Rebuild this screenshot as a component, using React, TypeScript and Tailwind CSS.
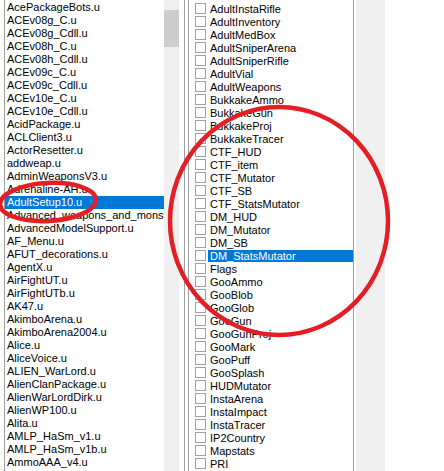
import React from "react";

const leftItems = [
  "AcePackageBots.u",
  "ACEv08g_C.u",
  "ACEv08g_Cdll.u",
  "ACEv08h_C.u",
  "ACEv08h_Cdll.u",
  "ACEv09c_C.u",
  "ACEv09c_Cdll.u",
  "ACEv10e_C.u",
  "ACEv10e_Cdll.u",
  "AcidPackage.u",
  "ACLClient3.u",
  "ActorResetter.u",
  "addweap.u",
  "AdminWeaponsV3.u",
  "Adrenaline-AH.u",
  "AdultSetup10.u",
  "Advanced_weapons_and_monsters.u",
  "AdvancedModelSupport.u",
  "AF_Menu.u",
  "AFUT_decorations.u",
  "AgentX.u",
  "AirFightUT.u",
  "AirFightUTb.u",
  "AK47.u",
  "AkimboArena.u",
  "AkimboArena2004.u",
  "Alice.u",
  "AliceVoice.u",
  "ALIEN_WarLord.u",
  "AlienClanPackage.u",
  "AlienWarLordDirk.u",
  "AlienWP100.u",
  "Alita.u",
  "AMLP_HaSm_v1.u",
  "AMLP_HaSm_v1b.u",
  "AmmoAAA_v4.u",
];

const rightItems = [
  "AdultInstaRifle",
  "AdultInventory",
  "AdultMedBox",
  "AdultSniperArena",
  "AdultSniperRifle",
  "AdultVial",
  "AdultWeapons",
  "BukkakeAmmo",
  "BukkakeGun",
  "BukkakeProj",
  "BukkakeTracer",
  "CTF_HUD",
  "CTF_item",
  "CTF_Mutator",
  "CTF_SB",
  "CTF_StatsMutator",
  "DM_HUD",
  "DM_Mutator",
  "DM_SB",
  "DM_StatsMutator",
  "Flags",
  "GooAmmo",
  "GooBlob",
  "GooGlob",
  "GooGun",
  "GooGunProj",
  "GooMark",
  "GooPuff",
  "GooSplash",
  "HUDMutator",
  "InstaArena",
  "InstaImpact",
  "InstaTracer",
  "IP2Country",
  "Mapstats",
  "PRI",
];

export default function App() {
  return (
    <div
      className="relative w-[444px] h-[471px] overflow-hidden bg-white flex text-[11px] text-black"
      style={{ fontFamily: '"Liberation Sans", Arial, sans-serif' }}
    >
      <div className="w-[4px] shrink-0" />
      {/* left list */}
      <div className="w-[160px] shrink-0 border-l border-[#a0a0a0] pt-[1px] overflow-hidden">
        {leftItems.map((t, i) => (
          <div
            key={t}
            className={
              "h-[13px] leading-[13px] pl-[2px] whitespace-nowrap overflow-hidden " +
              (i === 15 ? "bg-[#0078d7] text-white" : "")
            }
          >
            {t}
          </div>
        ))}
      </div>
      {/* scrollbar */}
      <div className="w-[15px] shrink-0 bg-[#f0f0f0] pt-[10px]">
        <div className="h-[37px] bg-[#cdcdcd]" />
      </div>
      <div className="w-[5px] shrink-0" />
      <div className="w-[1px] shrink-0 bg-[#a0a0a0]" />
      <div className="w-[3px] shrink-0" />
      {/* checkbox list */}
      <div className="w-[166px] shrink-0 border-l border-r border-[#a0a0a0] pt-[2px] overflow-hidden">
        {rightItems.map((t, i) => (
          <div key={t} className="h-[13px] flex items-center">
            <div className="ml-[6px] w-[11px] h-[11px] shrink-0 border border-[#a0a0a0] bg-white" />
            <div
              className={
                "ml-[2px] flex-1 h-[12px] leading-[12px] pl-[2px] whitespace-nowrap " +
                (i === 19 ? "bg-[#0078d7] text-white" : "")
              }
            >
              {t}
            </div>
          </div>
        ))}
      </div>
      <div className="w-[2px] shrink-0" />
      <div className="w-[29px] shrink-0 bg-[#f0f0f0]" />

      {/* red annotations */}
      <svg
        className="absolute inset-0 pointer-events-none"
        width="444"
        height="471"
        viewBox="0 0 444 471"
      >
        <ellipse cx="48" cy="202" rx="48" ry="19" fill="none" stroke="#e31e24" strokeWidth="4.5" transform="rotate(-3 48 202)" />
        <ellipse cx="279" cy="221" rx="109" ry="114" fill="none" stroke="#e31e24" strokeWidth="4.5" />
      </svg>
    </div>
  );
}
